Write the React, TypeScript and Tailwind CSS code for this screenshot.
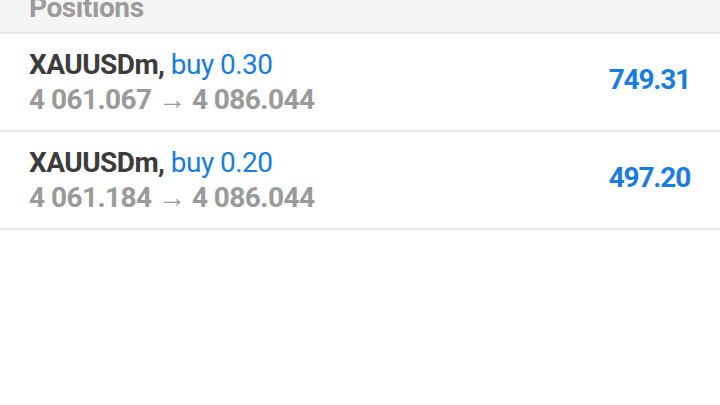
import React from "react";

const rows = [
  { sym: "XAUUSDm,", side: "buy 0.30", open: "4 061.067", cur: "4 086.044", pl: "749.31" },
  { sym: "XAUUSDm,", side: "buy 0.20", open: "4 061.184", cur: "4 086.044", pl: "497.20" },
];

export default function App() {
  return (
    <div className="w-[720px] h-[405px] bg-white overflow-hidden" style={{ fontFamily: "Roboto, 'Noto Sans', sans-serif" }}>
      <div className="h-[32px] bg-[#f5f5f5] overflow-hidden pl-[29px]">
        <div className="mt-[-10px] text-[28px] leading-[35px] tracking-[-0.4px] font-bold text-[#9b9b9b]">Positions</div>
      </div>
      {rows.map((r, i) => (
        <div key={i} className="border-t-2 border-[#e6e6e6] flex items-center justify-between pl-[29px] pr-[30px] pt-[13px] pb-[13px]">
          <div className="text-[28px] leading-[35px] tracking-[-0.55px]">
            <div>
              <span className="font-bold text-[#3c3c3c]">{r.sym}</span>{" "}
              <span className="font-normal text-[#1a7ddb]">{r.side}</span>
            </div>
            <div className="font-bold text-[#9a9a9a]">
              {r.open} <span className="font-normal">→</span> {r.cur}
            </div>
          </div>
          <div className="text-[28px] leading-[35px] tracking-[-1.2px] font-bold text-[#1a7ddb] mt-[-5px]">{r.pl}</div>
        </div>
      ))}
      <div className="border-t-2 border-[#e6e6e6]" />
    </div>
  );
}
